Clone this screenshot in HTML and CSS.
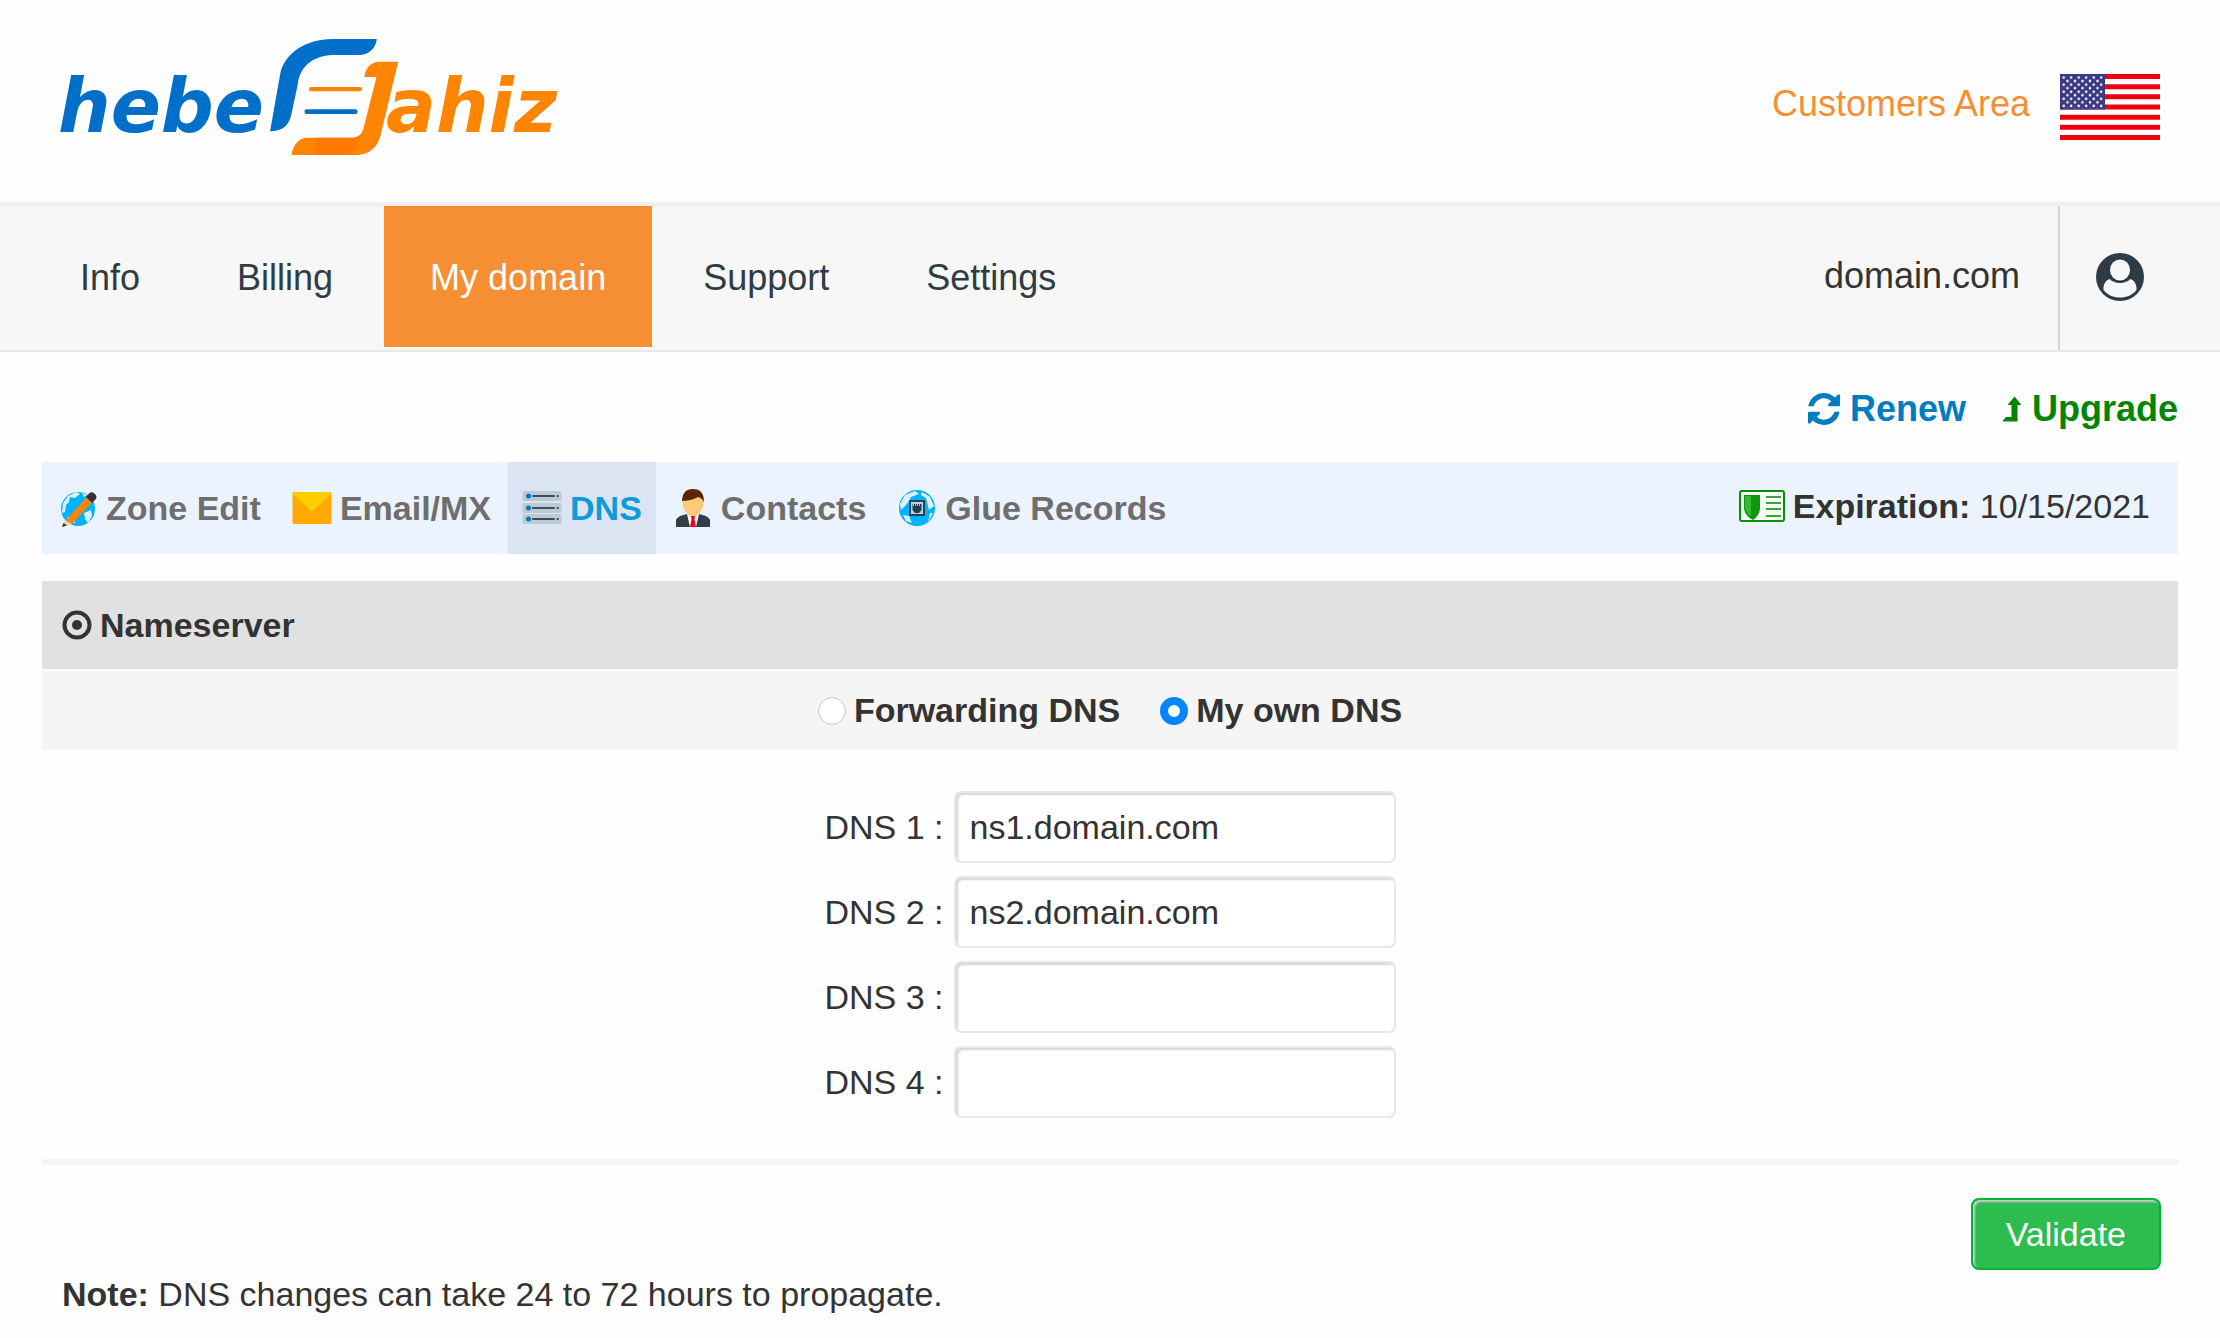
FILE: index.html
```html
<!DOCTYPE html>
<html lang="en">
<head>
  <meta charset="UTF-8">
  <meta name="viewport" content="width=device-width, initial-scale=1.0">
  <title>Customers Area - DNS</title>
  <link rel="stylesheet" href="styles.css">
</head>
<body>
  <header class="header">
    <a href="#" class="logo" aria-label="heberjahiz">
      <svg width="526" height="116" viewBox="-10 0 526 116">
        <text class="logo-text blue" x="-2" y="93">hebe</text>
        <text class="logo-text orange" x="326" y="93">ahiz</text>
        <g transform="scale(.3444 .3333) translate(-58 -57)">
          <path fill="#006fca" d="M668 334L698 158C712 100 770 57 850 57H978C975 85 955 105 926 105H850C790 108 754 140 748 195L730 282C724 314 706 334 668 334Z"/>
          <path fill="#ff8500" d="M1040 125L989 345C982 380 955 405 920 405H730C734 375 752 353 777 353H908C925 353 936 340 940 322L977 171H942C944 145 960 125 986 125Z"/>
          <path fill="#ff7900" d="M800 353H908C925 353 932 345 936 340C930 370 910 400 880 405H800Z"/>
          <rect fill="#ff8500" x="781" y="201" width="154" height="13" rx="6"/>
          <rect fill="#006fca" x="768" y="268" width="154" height="14" rx="6"/>
        </g>
      </svg>
    </a>
    <div class="header-right">
      <a href="#" class="area-link">Customers Area</a>
      <a href="#" aria-label="English">
        <svg class="flag" width="100" height="66" viewBox="0 0 100 66">
          <defs>
            <pattern id="stars" x="0" y="0" width="7.5" height="7.1" patternUnits="userSpaceOnUse">
              <circle cx="3.7" cy="3.5" r="1.3" fill="#fff"/>
              <circle cx="0" cy="0" r="1.3" fill="#fff"/>
              <circle cx="7.5" cy="0" r="1.3" fill="#fff"/>
              <circle cx="0" cy="7.1" r="1.3" fill="#fff"/>
              <circle cx="7.5" cy="7.1" r="1.3" fill="#fff"/>
            </pattern>
          </defs>
          <rect width="100" height="66" fill="#fff"/>
          <path stroke="#ec000f" stroke-width="5.08" d="M0 2.5H100M0 12.7H100M0 22.8H100M0 33H100M0 43.2H100M0 53.3H100M0 63.5H100"/>
          <rect width="45" height="35.5" fill="#393782"/>
          <rect x="1.8" y="1.8" width="41.5" height="32.5" fill="url(#stars)"/>
        </svg>
      </a>
    </div>
  </header>

  <nav class="navbar">
    <div class="menu">
      <a href="#">Info</a>
      <a href="#">Billing</a>
      <a href="#" class="active">My domain</a>
      <a href="#">Support</a>
      <a href="#">Settings</a>
    </div>
    <div class="account">
      <span class="account-name">domain.com</span>
      <a href="#" class="account-user" aria-label="Account">
        <svg width="48" height="48" viewBox="0 0 48 48">
          <circle cx="24" cy="24" r="24" fill="#303c45"/>
          <path fill="#f7f7f7" d="M14 26C17 31 31 31 34 26C38 27 41 31 40.500 37C33 47 15 47 7.500 37C7 31 10 27 14 26Z"/>
          <ellipse cx="24" cy="17.500" rx="11.500" ry="12.500" fill="#303c45"/>
          <ellipse cx="24" cy="17" rx="10" ry="10.500" fill="#f7f7f7"/>
        </svg>
      </a>
    </div>
  </nav>

  <main class="content">
    <div class="actions">
      <a href="#" class="renew">
        <svg width="32" height="32" viewBox="0 0 1536 1536" fill="currentColor">
          <path d="M1511 928q0 5-1 7-64 268-268 434.500t-478 166.500q-146 0-282.500-55t-243.500-157l-129 129q-19 19-45 19t-45-19-19-45v-448q0-26 19-45t45-19h448q26 0 45 19t19 45-19 45l-137 137q71 66 161 102t187 36q134 0 250-65t186-179q11-17 53-117 8-23 30-23h192q13 0 22.500 9.500t9.500 22.500zm25-800v448q0 26-19 45t-45 19h-448q-26 0-45-19t-19-45 19-45l138-138q-148-137-349-137-134 0-250 65t-186 179q-11 17-53 117-8 23-30 23h-199q-13 0-22.500-9.500t-9.500-22.500v-7q65-268 270-434.500t480-166.500q146 0 284 55.500t245 156.500l130-129q19-19 45-19t45 19 19 45z"/>
        </svg>
        Renew
      </a>
      <a href="#" class="upgrade">
        <svg width="20" height="26" viewBox="0 0 20 26" fill="currentColor">
          <path d="M12.500 0.500L19.500 9H15.500V25.500H1.500Q0.500 25.500 1 24.500L4 21H9.500V9H5.500Z"/>
        </svg>
        Upgrade
      </a>
    </div>

    <div class="tabs">
      <a href="#">
        <svg width="40" height="40" viewBox="0 0 40 40">
          <circle cx="20" cy="21" r="17" fill="#00b2ff"/>
          <path fill="#dff2fb" d="M5 15L10 8L18 4L22 6L17 10L12 9L11 14L8 17L7 24L4 25ZM24 5L29 7L26 9ZM26 25L33 22L34 28L30 35L27 31ZM9 29L15 29L17 35L12 35Z"/>
          <path fill="#ff8500" d="M8 32L29 9L34 14L14 36Z"/>
          <path fill="#f9cfa5" d="M7 32L14 36L4 39Z"/>
          <path fill="#333" d="M4 39L5.500 35L9 37.500Z"/>
          <path fill="#333" d="M28 9L31 5.500Q34 3 37 6T37 12L34 15Z"/>
        </svg>
        Zone Edit
      </a>
      <a href="#">
        <svg width="40" height="40" viewBox="0 0 40 40">
          <rect x="0.500" y="4" width="39" height="32" rx="2" fill="#ffa800"/>
          <path fill="#ffce00" d="M1 6Q1 4 3 4H37Q39 4 39 6L20 24Z"/>
        </svg>
        Email/MX
      </a>
      <a href="#" class="active">
        <svg width="40" height="40" viewBox="0 0 40 40">
          <g fill="#bdcad2">
            <rect x="0.500" y="3" width="39" height="10" rx="1.500"/>
            <rect x="0.500" y="15" width="39" height="10" rx="1.500"/>
            <rect x="0.500" y="26" width="39" height="10" rx="1.500"/>
          </g>
          <g fill="#0077c8">
            <circle cx="6.500" cy="8" r="2.500"/>
            <circle cx="6.500" cy="20" r="2.500"/>
            <circle cx="6.500" cy="31" r="2.500"/>
          </g>
          <path stroke="#34525e" stroke-width="2" stroke-linecap="round" d="M11 8H32M35.500 8H36M11 20H32M35.500 20H36M11 31H32M35.500 31H36"/>
        </svg>
        DNS
      </a>
      <a href="#">
        <svg width="40" height="40" viewBox="0 0 40 40">
          <path fill="#2f3e49" d="M3 39V32Q4 28 14 26H26Q36 28 37 32V39Z"/>
          <path fill="#fff" d="M14 26H26L23 39H17Z"/>
          <path fill="#ffce85" d="M14 22H26V26L20 30L14 26Z"/>
          <ellipse cx="20" cy="15" rx="10.500" ry="12" fill="#ffc97c"/>
          <path fill="#5a2800" d="M9 14Q9 1 20 1T31 14Q29 10 25 9Q18 13 9 13Z"/>
          <path fill="#f00018" d="M18 28H22L21.500 31L23 39H17L18.500 31Z"/>
        </svg>
        Contacts
      </a>
      <a href="#">
        <svg width="40" height="40" viewBox="0 0 40 40">
          <circle cx="20" cy="20" r="18" fill="#00b2ff"/>
          <path fill="#dff2fb" d="M3 16L8 7L18 3L22 6L14 9L12 13L9 17L4 22ZM25 4L33 9L37 18L32 22L29 10L24 7ZM33 25L36 25L31 34ZM6 27L12 28L15 35L9 33Z"/>
          <rect x="13" y="13" width="14" height="14" fill="#b9d2dd" stroke="#254553" stroke-width="2"/>
          <path fill="#183f50" d="M15.500 16H24.500V22L22 25H18L15.500 22Z"/>
          <path stroke="#ffb000" stroke-width="2" stroke-dasharray="1 1" d="M16 17H24"/>
        </svg>
        Glue Records
      </a>
      <div class="expiration">
        <svg width="46" height="34" viewBox="0 0 46 34">
          <rect x="1" y="2" width="44" height="30" rx="2" fill="#f4fff4" stroke="#0b8c0d" stroke-width="2"/>
          <path fill="#0b980d" d="M5 6H21V20Q20 27 14 31Q6 27 5 20Z"/>
          <path fill="#36b837" d="M6 7H12V27Q7 24 6 19Z"/>
          <path stroke="#3f9e42" stroke-width="2" d="M27 8H42M27 14H42M27 20H42M27 27H42"/>
        </svg>
        <span><strong>Expiration:</strong> 10/15/2021</span>
      </div>
    </div>

    <form class="dns-form">
      <h2 class="section-title">
        <svg width="30" height="30" viewBox="0 0 30 30">
          <circle cx="15" cy="15" r="12.500" fill="none" stroke="#333" stroke-width="4"/>
          <circle cx="15" cy="15" r="5" fill="#333"/>
        </svg>
        Nameserver
      </h2>

      <div class="dns-type">
        <label><input type="radio" name="dnsType" value="forwarding"> Forwarding DNS</label>
        <label><input type="radio" name="dnsType" value="own" checked> My own DNS</label>
      </div>

      <div class="dns-fields">
        <div class="field">
          <label for="dns1">DNS 1 :</label>
          <input type="text" id="dns1" value="ns1.domain.com">
        </div>
        <div class="field">
          <label for="dns2">DNS 2 :</label>
          <input type="text" id="dns2" value="ns2.domain.com">
        </div>
        <div class="field">
          <label for="dns3">DNS 3 :</label>
          <input type="text" id="dns3">
        </div>
        <div class="field">
          <label for="dns4">DNS 4 :</label>
          <input type="text" id="dns4">
        </div>
      </div>

      <div class="form-footer">
        <button type="submit" class="validate-button">Validate</button>
      </div>
    </form>

    <p class="note"><strong>Note:</strong> DNS changes can take 24 to 72 hours to propagate.</p>
  </main>
</body>
</html>
```
FILE: styles.css
```css
* {
  box-sizing: border-box;
}

body {
  font-family: "Liberation Sans", Arial, sans-serif;
  font-size: 34px;
  line-height: 40px;
  margin: 0;
  background-color: #fefefe;
  color: #333;
}

a {
  text-decoration: none;
  color: inherit;
}

svg {
  display: block;
  flex-shrink: 0;
}

/* header */
.header {
  display: flex;
  justify-content: space-between;
  align-items: flex-start;
  padding: 39px 60px 47px 50px;
}

.logo-text {
  font-family: "DejaVu Sans", sans-serif;
  font-size: 74px;
  font-weight: bold;
  font-style: oblique;
}

.blue {
  fill: #006fca;
}

.orange {
  fill: #ff8500;
}

.header-right {
  display: flex;
  align-items: center;
  gap: 30px;
  padding-top: 35px;
}

.area-link {
  color: #f68e33;
  font-size: 36px;
  padding-bottom: 6px;
}

/* main menu */
.navbar {
  display: flex;
  justify-content: space-between;
  background-color: #f7f7f7;
  border-top: 4px solid #efefef;
  border-bottom: 2px solid #e8e8e8;
  font-size: 36px;
}

.menu {
  display: flex;
  gap: 5px;
  padding: 0 34px 3px;
}

.menu a {
  padding: 52px 46px 49px;
  color: #303c45;
}

.menu a.active {
  background-color: #f68e33;
  color: #fff;
}

.account {
  display: flex;
  align-items: center;
}

.account-name {
  padding: 0 38px 4px;
}

.account-user {
  display: flex;
  align-items: center;
  align-self: stretch;
  padding: 0 76px 2px 36px;
  border-left: 2px solid #d5d5d5;
}

/* page */
.content {
  padding: 37px 42px 0;
}

.actions {
  display: flex;
  justify-content: flex-end;
  gap: 36px;
  font-size: 36px;
  font-weight: bold;
  margin-bottom: 33px;
}

.actions a {
  display: flex;
  align-items: center;
  gap: 10px;
}

.renew {
  color: #007cc0;
}

.upgrade {
  color: #008500;
}

.tabs {
  display: flex;
  gap: 3px;
  background-color: #ebf3ff;
  padding-left: 2px;
}

.tabs a {
  display: flex;
  align-items: center;
  gap: 8px;
  padding: 26px 14px;
  color: #6e6e6e;
  font-weight: bold;
}

.tabs a.active {
  background-color: #dbe4f3;
  color: #0f9bd7;
}

.expiration {
  display: flex;
  align-items: center;
  gap: 8px;
  margin-left: auto;
  padding: 0 28px 4px 0;
}

.section-title {
  display: flex;
  align-items: center;
  gap: 8px;
  margin: 27px 0 2px;
  padding: 24px 20px;
  background-color: #e1e1e1;
  font-size: 34px;
  line-height: 40px;
}

.dns-type {
  display: flex;
  justify-content: center;
  gap: 40px;
  padding: 19px 0 20px;
  background-color: #f5f5f5;
  font-weight: bold;
}

.dns-type label {
  display: flex;
  align-items: center;
  gap: 8px;
}

.dns-type input {
  appearance: none;
  width: 28px;
  height: 28px;
  margin: 2px 0 0;
  border: 1px solid #c4c4c4;
  border-radius: 50%;
  background-color: #fff;
}

.dns-type input:checked {
  border: 8px solid #0586ff;
}

.dns-fields {
  display: flex;
  flex-direction: column;
  align-items: center;
  gap: 13px;
  padding: 41px 0;
  border-bottom: 6px solid #f5f5f5;
}

.field {
  display: flex;
  align-items: center;
  gap: 10px;
}

.field input {
  width: 442px;
  height: 72px;
  padding: 0 14px;
  border: 2px solid #e8e8e8;
  border-radius: 7px;
  background-color: #fff;
  box-shadow: inset 2px 2px 2px #d5d5d5;
  color: #333;
  font: inherit;
}

.form-footer {
  display: flex;
  justify-content: flex-end;
  padding: 33px 17px 0;
}

.validate-button {
  height: 72px;
  padding: 0 33px;
  border: 2px solid #05b337;
  border-radius: 8px;
  background-color: #2dbc4e;
  box-shadow: inset 2px 2px 2px #ccc;
  color: #fff;
  font: inherit;
  cursor: pointer;
}

.validate-button:hover {
  background-color: #27a945;
}

.note {
  margin: 4px 20px 0;
}
```
